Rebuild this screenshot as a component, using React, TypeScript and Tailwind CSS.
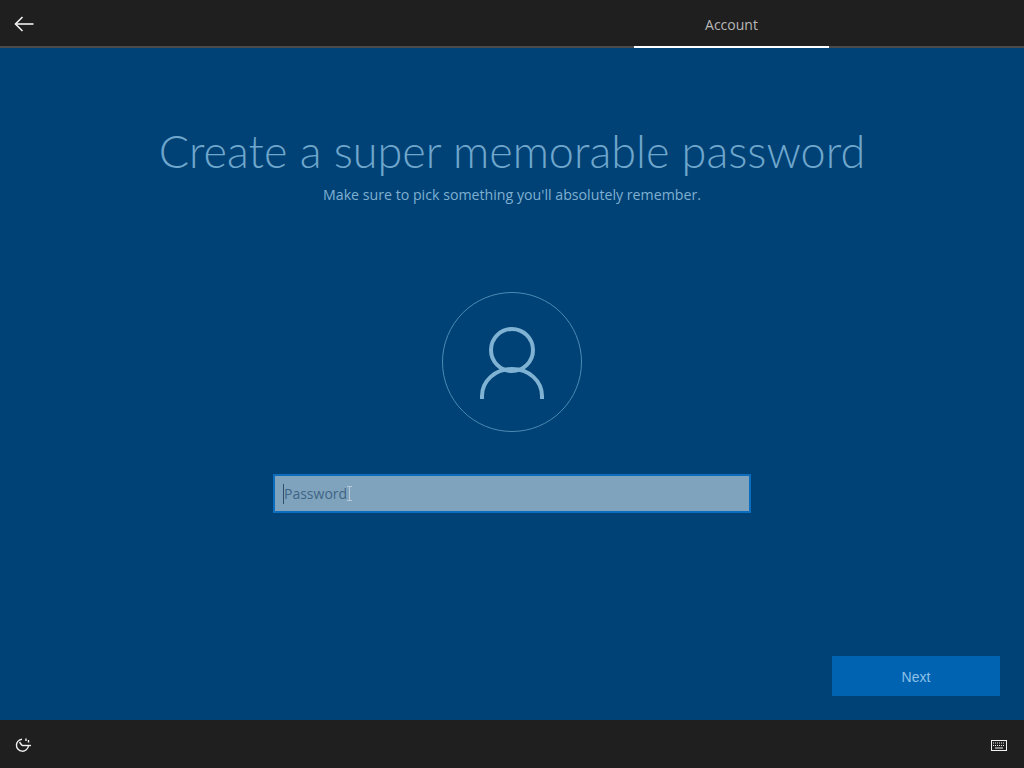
const ArrowBack = () => (
  <svg width="20" height="16" viewBox="0 0 20 16" fill="none" stroke="#f2f2f2" strokeWidth="1.6">
    <path d="M1.5 8H19.5" />
    <path d="M8.5 1L1.5 8L8.5 15" />
  </svg>
)

const UserIcon = () => (
  <svg width="66" height="74" viewBox="0 0 66 74" fill="none" stroke="#7fb2d3" strokeWidth="4">
    <circle cx="33" cy="24" r="21" />
    <path d="M3 73V70C3 55 16 43 33 43C50 43 63 55 63 70V73" />
  </svg>
)

const EaseIcon = () => (
  <svg width="18" height="16" viewBox="0 0 18 16" fill="none" stroke="#f2f2f2" strokeWidth="1.4">
    <path d="M7 2.2A6 6 0 1 0 13.4 9" />
    <path d="M7 8.5L4.5 5" />
    <path d="M7 8.5H16" />
    <path d="M11 1.5V4M13.5 3V5.5" />
  </svg>
)

const KeyboardIcon = () => (
  <svg width="16" height="11" viewBox="0 0 16 11" fill="none">
    <rect x="0.5" y="0.5" width="15" height="10" stroke="#f2f2f2" />
    <path d="M2 3H14M2 5.5H14" stroke="#f2f2f2" strokeWidth="1" strokeDasharray="1 1" />
    <path d="M4 8H12" stroke="#f2f2f2" />
  </svg>
)

// mouse i-beam sitting just after the placeholder
const IBeam = () => (
  <svg width="5" height="15" viewBox="0 0 5 15" fill="none" stroke="#b5c9d8">
    <path d="M0 0.5H5M0 14.5H5M2.5 0.5V14.5" />
  </svg>
)

export default function App() {
  return (
    <div className="w-[1024px] h-[768px] flex flex-col bg-[#004275] overflow-hidden font-['Open_Sans',sans-serif]">
      <div className="h-[48px] shrink-0 flex bg-[#1f1f1f] border-b-2 border-[#4b4b4b]">
        <div className="w-[634px] pl-[14px] pt-[2px] flex items-center">
          <ArrowBack />
        </div>
        <div className="w-[195px] h-[48px] flex items-center justify-center border-b-2 border-white text-[14px] text-[#b8b8b8] pt-[2px]">
          Account
        </div>
      </div>

      <div className="flex-1 flex flex-col items-center pt-[76px] relative">
        <h1 className="text-[45px] leading-[54px] font-light text-[#6fa6cc] whitespace-nowrap font-['Lato',sans-serif]">
          Create a super memorable password
        </h1>
        <p className="mt-[7px] text-[14.2px] leading-[20px] text-[#7fb0d2]">
          Make sure to pick something you'll absolutely remember.
        </p>
        <div className="mt-[87px] w-[140px] h-[140px] rounded-full border border-[#4d8ab5] flex items-center justify-center pt-[2px]">
          <UserIcon />
        </div>
        <div className="mt-[42px] w-[478px] h-[39px] bg-[#7fa3bd] border-2 border-[#0a6dbd] flex items-center pl-[8px] text-[14px] text-[#3f6585]">
          <span className="border-l border-[#2d4f6c] leading-[20px]">Password</span>
          <span className="ml-[0px]">
            <IBeam />
          </span>
        </div>
        <div className="mt-auto mb-[24px] self-end mr-[24px] w-[168px] h-[40px] bg-[#0063b1] flex items-center justify-center pt-[2px] text-[14px] text-[#8cc0e8] font-['Liberation_Sans',sans-serif]">
          Next
        </div>
      </div>

      <div className="h-[48px] shrink-0 bg-[#1f1f1f] flex items-center justify-between pl-[15px] pr-[17px] pt-[2px]">
        <EaseIcon />
        <KeyboardIcon />
      </div>
    </div>
  )
}
